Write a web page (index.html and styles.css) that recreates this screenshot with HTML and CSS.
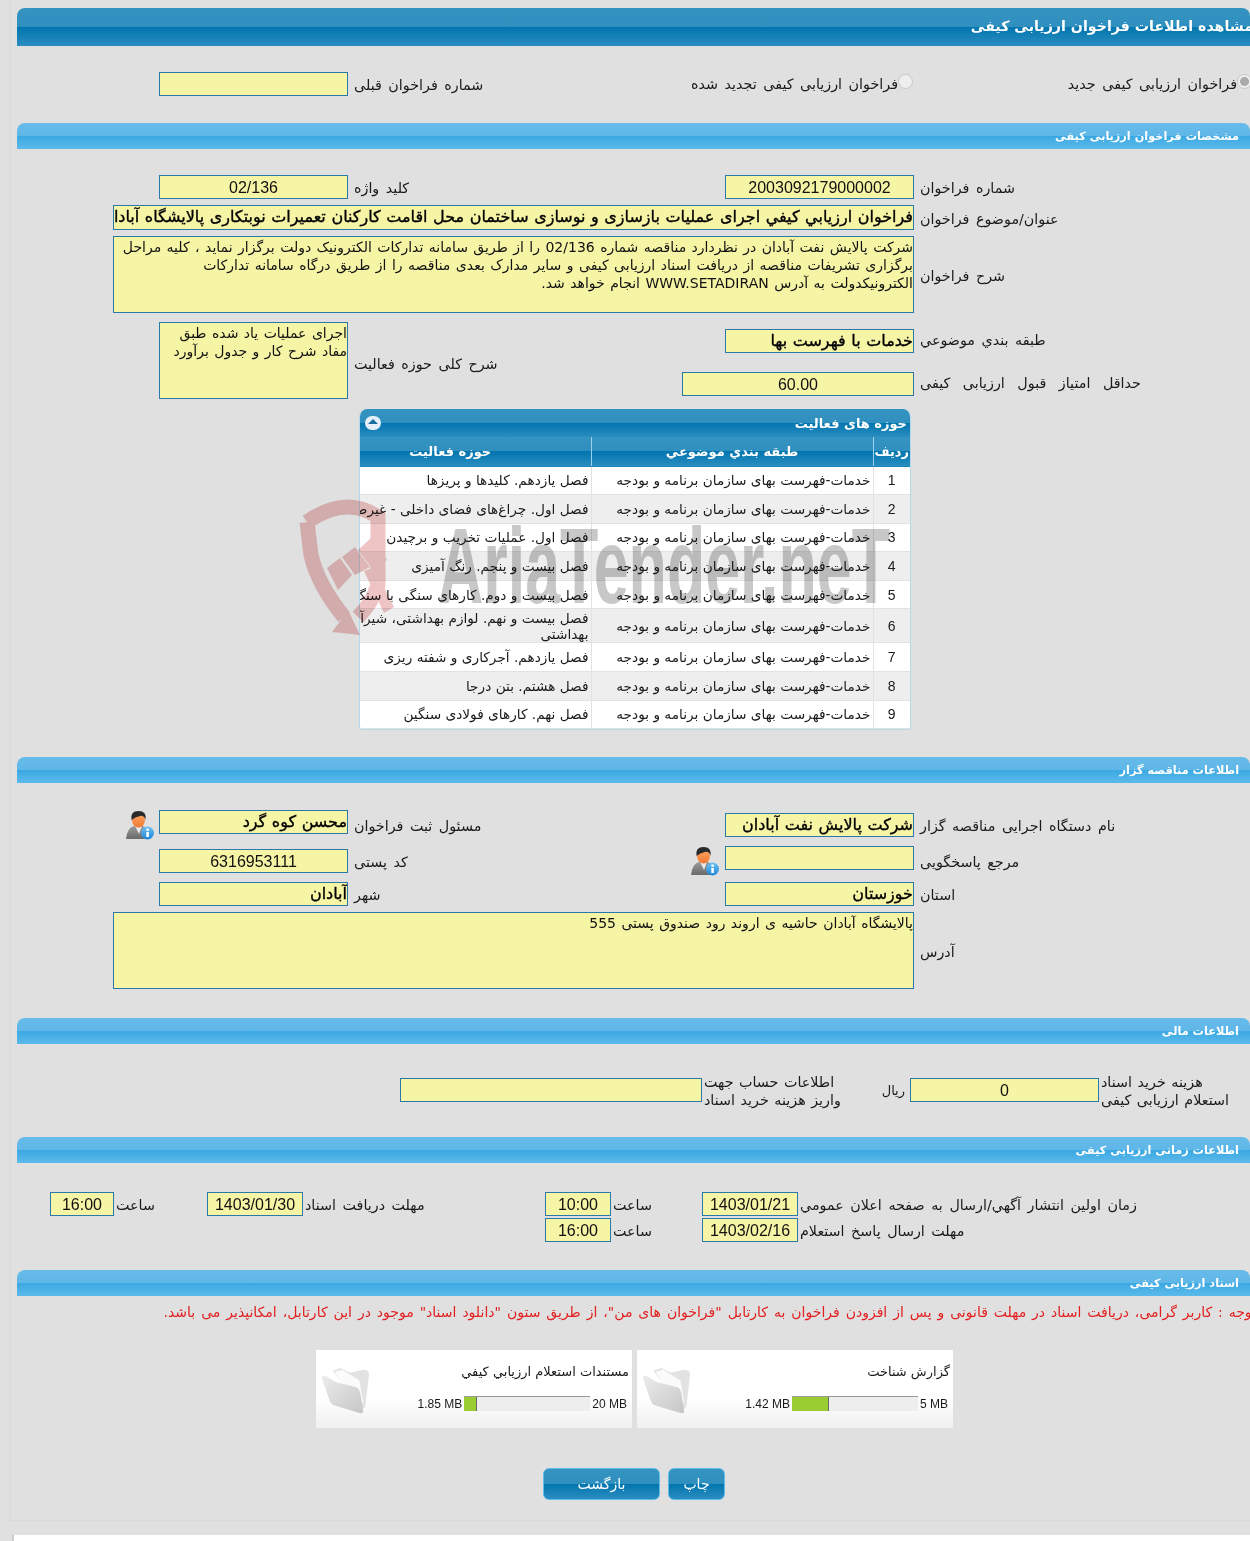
FILE: index.html
```html
<!DOCTYPE html>
<html lang="fa">
<head>
<meta charset="utf-8">
<title>مشاهده اطلاعات فراخوان ارزیابی کیفی</title>
<link rel="stylesheet" href="styles.css">
</head>
<body>
<main class="page">
  <h1 class="bar bar-main"><span>مشاهده اطلاعات فراخوان ارزیابی کیفی</span></h1>

  <div class="radios">
    <label class="radio-a"><i class="radio"></i>فراخوان ارزيابی کیفی جدید</label>
    <label class="radio-b"><i class="radio"></i>فراخوان ارزيابی کیفی تجدید شده</label>
    <span class="lbl-left">شماره فراخوان قبلی</span>
    <div class="field"></div>
  </div>

  <h2 class="bar bar-sub">مشخصات فراخوان ارزیابی کیفی</h2>
  <section class="form form-spec">
    <span class="lbl">شماره فراخوان</span>
    <div class="field num">2003092179000002</div>
    <span class="lbl-left">کلید واژه</span>
    <div class="field num">02/136</div>

    <span class="lbl">عنوان/موضوع فراخوان</span>
    <div class="field wide strong">فراخوان ارزيابي كيفي اجرای عملیات بازسازی و نوسازی ساختمان محل اقامت کارکنان تعمیرات نوبتکاری پالایشگاه آبادان</div>

    <span class="lbl">شرح فراخوان</span>
    <div class="field wide area">شرکت پالایش نفت آبادان در نظردارد مناقصه شماره 02/136 را از طریق سامانه تدارکات الکترونیک دولت برگزار نماید ، کلیه مراحل<br>برگزاری تشریفات مناقصه از دریافت اسناد ارزیابی کیفی و سایر مدارک بعدی مناقصه را از طریق درگاه سامانه تدارکات<br>الکترونیکدولت به آدرس WWW.SETADIRAN انجام خواهد شد.</div>

    <span class="lbl">طبقه بندي موضوعي</span>
    <div class="field strong nudge">خدمات با فهرست بها</div>
    <span class="lbl-left span2">شرح کلی حوزه فعالیت</span>
    <div class="field area tall">اجرای عملیات یاد شده طبق<br>مفاد شرح کار و جدول برآورد</div>

    <span class="lbl stretch">حداقل امتیاز قبول ارزیابی کیفی</span>
    <div class="field num score nudge">60.00</div>
  </section>

  <div class="activity">
    <div class="activity-title"><span>حوزه های فعالیت</span><i class="collapse"></i></div>
    <table>
      <colgroup><col class="c-id"><col class="c-cat"><col class="c-act"></colgroup>
      <thead><tr><th>رديف</th><th>طبقه بندي موضوعي</th><th>حوزه فعالیت</th></tr></thead>
      <tbody>
        <tr><td>1</td><td>خدمات-فهرست بهای سازمان برنامه و بودجه</td><td>فصل یازدهم. کلیدها و پریزها</td></tr>
        <tr><td>2</td><td>خدمات-فهرست بهای سازمان برنامه و بودجه</td><td>فصل اول. چراغ‌های فضای داخلی - غیرصنعتی</td></tr>
        <tr><td>3</td><td>خدمات-فهرست بهای سازمان برنامه و بودجه</td><td>فصل اول. عملیات تخریب و برچیدن</td></tr>
        <tr><td>4</td><td>خدمات-فهرست بهای سازمان برنامه و بودجه</td><td>فصل بیست و پنجم. رنگ آمیزی</td></tr>
        <tr><td>5</td><td>خدمات-فهرست بهای سازمان برنامه و بودجه</td><td>فصل بیست و دوم. کارهای سنگی با سنگ</td></tr>
        <tr class="tall-row"><td>6</td><td>خدمات-فهرست بهای سازمان برنامه و بودجه</td><td>فصل بیست و نهم. لوازم بهداشتی، شیرآلات<br>بهداشتی</td></tr>
        <tr><td>7</td><td>خدمات-فهرست بهای سازمان برنامه و بودجه</td><td>فصل یازدهم. آجرکاری و شفته ریزی</td></tr>
        <tr><td>8</td><td>خدمات-فهرست بهای سازمان برنامه و بودجه</td><td>فصل هشتم. بتن درجا</td></tr>
        <tr><td>9</td><td>خدمات-فهرست بهای سازمان برنامه و بودجه</td><td>فصل نهم. کارهای فولادی سنگین</td></tr>
      </tbody>
    </table>
  </div>

  <h2 class="bar bar-sub after-table">اطلاعات مناقصه گزار</h2>
  <section class="form form-owner">
    <span class="lbl">نام دستگاه اجرایی مناقصه گزار</span>
    <div class="field strong drop">شرکت پالایش نفت آبادان</div>
    <span class="lbl-left">مسئول ثبت فراخوان</span>
    <div class="field strong">محسن کوه گرد</div>
    <svg class="person" viewBox="0 0 30 30"><use href="#person"/></svg>

    <span class="lbl">مرجع پاسخگویی</span>
    <div class="field"></div>
    <div class="mid">
      <svg class="person" viewBox="0 0 30 30"><use href="#person"/></svg>
      <span class="lbl-left">کد پستی</span>
    </div>
    <div class="field num drop">6316953111</div>

    <span class="lbl">استان</span>
    <div class="field strong">خوزستان</div>
    <span class="lbl-left">شهر</span>
    <div class="field strong">آبادان</div>

    <span class="lbl">آدرس</span>
    <div class="field wide area">پالایشگاه آبادان حاشیه ی اروند رود صندوق پستی 555</div>
  </section>

  <h2 class="bar bar-sub after-address">اطلاعات مالی</h2>
  <section class="finance">
    <span class="lbl">هزینه خرید اسناد<br>استعلام ارزیابی کیفی</span>
    <div class="field num">0</div>
    <span class="unit">ریال</span>
    <span class="lbl">اطلاعات حساب جهت<br>واریز هزینه خرید اسناد</span>
    <div class="field"></div>
  </section>

  <h2 class="bar bar-sub after-finance">اطلاعات زمانی ارزیابی کیفی</h2>
  <section class="times">
    <span class="lbl">زمان اولین انتشار آگهي/ارسال به صفحه اعلان عمومي</span>
    <div class="field num">1403/01/21</div>
    <span class="lbl">ساعت</span>
    <div class="field num">10:00</div>
    <span class="lbl">مهلت دریافت اسناد</span>
    <div class="field num">1403/01/30</div>
    <span class="lbl">ساعت</span>
    <div class="field num">16:00</div>

    <span class="lbl row-start">مهلت ارسال پاسخ استعلام</span>
    <div class="field num">1403/02/16</div>
    <span class="lbl">ساعت</span>
    <div class="field num">16:00</div>
  </section>

  <h2 class="bar bar-sub after-times">اسناد ارزیابی کیفی</h2>
  <p class="notice">توجه : کاربر گرامی، دریافت اسناد در مهلت قانونی و پس از افزودن فراخوان به کارتابل "فراخوان های من"، از طریق ستون "دانلود اسناد" موجود در این کارتابل، امکانپذیر می باشد.</p>

  <div class="cards">
    <article class="card">
      <div class="card-body">
        <div class="card-title">گزارش شناخت</div>
        <div class="usage"><span class="size">5 MB</span><span class="track"><span class="fill" style="width:29%"></span></span><span class="size">1.42 MB</span></div>
      </div>
      <svg class="folder" viewBox="0 0 56 52"><use href="#folder"/></svg>
    </article>
    <article class="card">
      <div class="card-body">
        <div class="card-title">مستندات استعلام ارزیابي کیفي</div>
        <div class="usage"><span class="size">20 MB</span><span class="track"><span class="fill" style="width:10%"></span></span><span class="size">1.85 MB</span></div>
      </div>
      <svg class="folder" viewBox="0 0 56 52"><use href="#folder"/></svg>
    </article>
  </div>

  <div class="buttons">
    <button class="btn btn-print">چاپ</button>
    <button class="btn btn-back">بازگشت</button>
  </div>

  <svg class="watermark" viewBox="0 0 600 150" aria-hidden="true">
    <path class="wm-band" d="M9 27 Q30 12 50 12 Q66 12 80 22 L80 90 Q74 108 60 122 M9 27 L13 60 Q20 90 46 122"/>
    <path class="wm-red" d="M34 137 L50 115 L62 140 Z M29 73 L42 63 L54 80 L40 95 Z M44 62 L57 52 L72 72 L57 80 Z M60 55 L74 42 L89 65 L75 75 Z M66 76 L76 72 L96 112 L86 118 Z"/>
    <text class="wm-text" x="140" y="108" textLength="452" lengthAdjust="spacingAndGlyphs">AriaTender.neT</text>
  </svg>
</main>
<div class="foot"></div>

<svg class="defs" aria-hidden="true">
  <defs>
    <linearGradient id="suit" x1="0" y1="0" x2="0" y2="1"><stop offset="0" stop-color="#9a9a9a"/><stop offset="1" stop-color="#6a6a6a"/></linearGradient>
    <linearGradient id="face" x1="0" y1="0" x2="0" y2="1"><stop offset="0" stop-color="#ffa766"/><stop offset="1" stop-color="#f07a32"/></linearGradient>
    <linearGradient id="info" x1="0" y1="0" x2="0" y2="1"><stop offset="0" stop-color="#6cc1f2"/><stop offset="1" stop-color="#1f86d8"/></linearGradient>
    <linearGradient id="fold" x1="0" y1="0" x2="1" y2="1"><stop offset="0" stop-color="#ececec"/><stop offset="1" stop-color="#c6c6c6"/></linearGradient>
    <symbol id="person" viewBox="0 0 30 30">
      <path d="M1 29 Q2 18 9 16 L18 16 Q24 18 25 29 Z" fill="url(#suit)"/>
      <path d="M10 16 L14 24 L17 16 Z" fill="#e8e8e8"/>
      <ellipse cx="13.5" cy="10" rx="6.5" ry="7.5" fill="url(#face)"/>
      <path d="M6.5 10 Q5 1 13.5 1 Q22 1 20.5 10 Q19 5 15 6 Q10 7 6.5 10 Z" fill="#2a2a2a"/>
      <circle cx="22.5" cy="23" r="6.5" fill="url(#info)"/>
      <rect x="21.3" y="22" width="2.6" height="5" fill="#fff"/>
      <rect x="21.3" y="18.6" width="2.6" height="2.2" fill="#fff"/>
    </symbol>
    <symbol id="folder" viewBox="0 0 56 52">
      <path d="M14 6 L22 3 L32 8 L46 5 Q52 5 52 10 L48 44 L44 46 Z" fill="#e2e2e2"/>
      <path d="M16 7 L24 5 L42 16 L46 40 L30 30 Z" fill="#fbfbfb"/>
      <path d="M3 14 Q2 11 6 11 L18 18 L38 23 Q42 24 43 30 L46 48 Q46 51 42 50 L16 42 Q12 41 11 37 Z" fill="url(#fold)"/>
    </symbol>
  </defs>
</svg>
</body>
</html>
```

FILE: styles.css
```css
* { box-sizing: border-box; }
html, body { margin: 0; padding: 0; }
body {
  width: 1250px;
  height: 1541px;
  overflow: hidden;
  background: #e0e0e0;
  color: #1a1a1a;
  font-family: "DejaVu Sans", sans-serif;
  font-size: 14.3px;
}
.page {
  position: relative;
  width: 1240px;
  height: 1521px;
  margin-left: 10px;
  padding: 8px 0 0 6px;
  border-left: 1px solid #dadada;
  border-bottom: 1px solid #dadada;
  overflow: hidden;
  direction: rtl;
}
.foot { height: 20px; margin: 14px 0 0 12px; background: #fff; border-left: 2px solid #ccc; }
.defs { position: absolute; width: 0; height: 0; }

.bar {
  margin: 0;
  color: #fff;
  font-weight: bold;
  display: flex;
  align-items: center;
  border-radius: 8px 8px 0 0;
}
.bar-main {
  height: 38px;
  font-size: 14.2px;
  background: linear-gradient(#3593c0 0, #2f8fbf 50%, #0275ae 50%, #2a8dc0 100%);
  padding-bottom: 2px;
}
.bar-main span { margin-right: -3px; white-space: nowrap; }
.bar-sub {
  height: 26px;
  font-size: 11.3px;
  padding-right: 11px;
  background: linear-gradient(#66bbe9 0, #5fb7e8 50%, #3aa8e2 50%, #5cbaeb 100%);
}
.after-table { margin-top: 27px; }
.after-address { margin-top: 29px; }
.after-finance { margin-top: 35px; }
.after-times { margin-top: 28px; }

.field {
  height: 24px;
  background: #f6f5a6;
  border: 1px solid #2a79ab;
  color: #111;
  font-size: 14px;
  line-height: 22px;
  overflow: hidden;
  white-space: nowrap;
  text-align: right;
}
.num { font-family: "Liberation Sans", sans-serif; font-size: 16px; line-height: 24px; text-align: center; }
.strong { font-size: 16px; word-spacing: 0.5px; -webkit-text-stroke: 0.35px #000; color: #000; }
.area { height: 77px; padding-top: 1px; white-space: normal; line-height: 18px; font-size: 14px; word-spacing: 1px; }

.lbl, .lbl-left {
  text-align: left;
  padding: 2px 0 0 6px;
  white-space: nowrap;
  line-height: 18px;
  word-spacing: 2px;
}
.stretch { word-spacing: 8px; }

.radios {
  display: grid;
  grid-template-columns: 337px 372px 193px 189px;
  align-items: center;
  height: 24px;
  margin: 26px 0 27px;
  white-space: nowrap;
  word-spacing: 2px;
}
.radio-a, .radio-b { display: flex; align-items: center; }
.radio-a { margin-right: -2px; }
.radio {
  width: 15px;
  height: 15px;
  margin-bottom: 5px;
  border-radius: 50%;
  background: #eee;
  border: 1px solid #c8c8c8;
}
.radio-a .radio { background: radial-gradient(#aaa 0 4px, #eee 5px); }

.form {
  display: grid;
  grid-template-columns: 336px 189px 377px 189px 46px;
  align-items: center;
  row-gap: 6px;
}
.form .lbl { grid-column: 1; }
.wide { grid-column: 2 / 6; }
.form-spec { margin-top: 26px; grid-template-rows: 24px 25px 77px 40px 34px; }
.form-spec .wide.strong { height: 25px; }
.form-spec .nudge { margin-top: 4px; }
.form-spec .span2 { grid-column: 3; grid-row: 4 / 6; margin-top: 8px; }
.form-spec .tall { grid-column: 4; grid-row: 4 / 6; align-self: end; }
.form-spec .score { width: 232px; }

.activity {
  width: 552px;
  margin: 10px 339px 0 0;
  background: #fff;
  border-radius: 8px 8px 4px 4px;
  overflow: hidden;
  border: 1px solid #b5d7ea;
  border-top: 0;
}
.activity-title {
  display: flex;
  justify-content: space-between;
  align-items: center;
  height: 28px;
  padding: 0 3px 0 5px;
  color: #fff;
  font-weight: bold;
  font-size: 13px;
  background: linear-gradient(#3593c0 0, #2f8fbf 50%, #0275ae 50%, #2a8dc0 100%);
}
.collapse {
  position: relative;
  width: 16px;
  height: 14px;
  border-radius: 8px;
  background: #e6f0fa;
}
.collapse::after {
  content: "";
  position: absolute;
  left: 3px;
  top: 3px;
  border: 5px solid transparent;
  border-top: 0;
  border-bottom: 5px solid #1a6da0;
}
table { width: 600px; border-collapse: collapse; table-layout: fixed; }
.c-id { width: 37px; }
.c-cat { width: 282px; }
.c-act { width: 281px; }
th {
  height: 29px;
  padding: 0;
  color: #fff;
  font-weight: bold;
  font-size: 13px;
  background: linear-gradient(#3593c0 0, #2f8fbf 50%, #0275ae 50%, #2a8dc0 100%);
  border-right: 1px solid #9cd0ec;
  border-bottom: 1px solid #1f86bd;
}
th:first-child { border-right: 0; }
td {
  height: 28.6px;
  padding: 0 2px;
  border-bottom: 1px solid #e2e2e2;
  border-right: 1px solid #e2e2e2;
  font-size: 13.7px;
  line-height: 16px;
  white-space: nowrap;
  overflow: hidden;
  text-align: right;
}
td:first-child { border-right: 0; text-align: center; font-family: "Liberation Sans", sans-serif; font-size: 14px; }
tbody tr:nth-child(even) { background: #eeeeee; }
.tall-row td { height: 34px; }

.form-owner { margin-top: 27px; grid-template-rows: 30px 30px 24px 77px; }
.form-owner .field:not(.wide) { align-self: start; }
.form-owner .drop { margin-top: 3px; }
.person { width: 30px; height: 30px; justify-self: start; }
.form-owner > .person { margin-right: 4px; }
.mid { display: flex; justify-content: space-between; align-items: center; }
.mid .person { margin-right: 5px; }

.finance {
  display: grid;
  grid-template-columns: 151px 189px 68px 140px 302px;
  grid-template-rows: 24px;
  align-items: center;
  margin-top: 34px;
}
.finance .lbl { padding-left: 2px; word-spacing: 1px; }
.unit { padding-right: 5px; font-size: 13px; }

.times {
  display: grid;
  grid-template-columns: 452px 96px 91px 66px 242px 96px 93px 64px;
  grid-auto-rows: 24px;
  row-gap: 2px;
  align-items: center;
  margin-top: 29px;
}
.times .lbl { padding-left: 2px; }
.row-start { grid-column: 1; }

.notice {
  margin: 7px -6px 0 0;
  height: 18px;
  line-height: 18px;
  color: #e32020;
  font-size: 14px;
  word-spacing: 1.5px;
  white-space: nowrap;
}

.cards { display: flex; gap: 5px; margin: 29px 297px 0 0; }
.card {
  width: 316px;
  height: 78px;
  display: flex;
  background: linear-gradient(#fff 60%, #f0f0f0);
}
.card-body { flex: 1; padding: 14px 3px 0 0; }
.card-title { font-size: 13px; line-height: 16px; }
.usage {
  display: flex;
  align-items: center;
  margin-top: 16px;
  font-family: "Liberation Sans", sans-serif;
  font-size: 12px;
}
.size { padding: 0 2px; direction: ltr; }
.track { position: relative; display: block; width: 126px; height: 15px; background: #eee; border-top: 1px solid #999; }
.fill { position: absolute; left: 0; top: 0; bottom: 0; background: #9acd32; border-right: 1px solid #666; }
.folder { width: 54px; height: 50px; margin: 15px 0 0 3px; }

.buttons { display: flex; gap: 8px; margin: 40px 525px 0 0; }
.btn {
  height: 32px;
  border: 1px solid #5fbce8;
  border-radius: 6px;
  background: linear-gradient(#3593c0 0, #2f8fbf 50%, #0275ae 50%, #2a8dc0 100%);
  color: #fff;
  font-family: inherit;
  font-size: 14px;
}
.btn-print { width: 57px; }
.btn-back { width: 117px; }

.watermark {
  position: absolute;
  left: 287px;
  top: 495px;
  width: 600px;
  height: 150px;
  direction: ltr;
  mix-blend-mode: multiply;
  pointer-events: none;
}
.wm-red { fill: #efc4c4; }
.wm-band { fill: none; stroke: #efc4c4; stroke-width: 15; }
.wm-text {
  font-family: "Liberation Sans", sans-serif;
  font-weight: bold;
  font-size: 108px;
  fill: #c8c8c8;
}
```
